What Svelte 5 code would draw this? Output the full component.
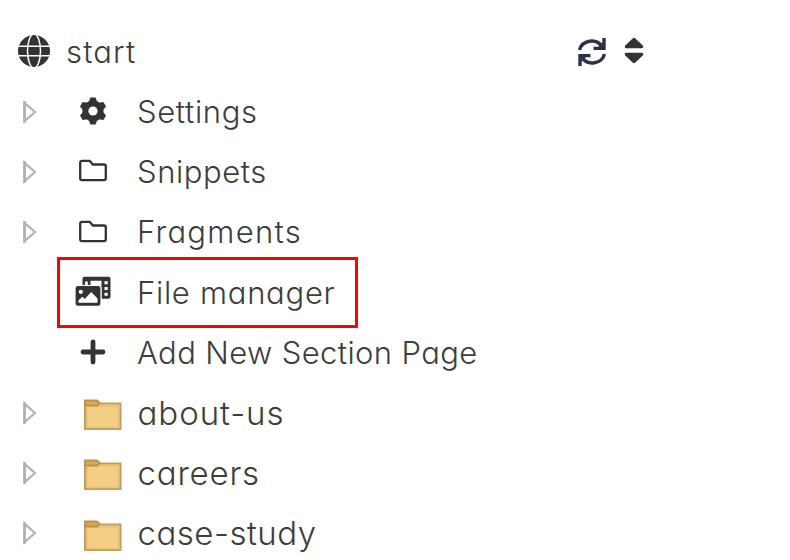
<script>
  const rows = [
    { label: 'Settings', icon: 'gear', open: true, ls: 0.65 },
    { label: 'Snippets', icon: 'folder', open: true, ls: 0.55 },
    { label: 'Fragments', icon: 'folder', open: true, ls: 1.3 },
    { label: 'File manager', icon: 'media', selected: true, ls: 0.72 },
    { label: 'Add New Section Page', icon: 'plus', ls: 0.38 },
    { label: 'about-us', icon: 'page', open: true, ls: 0.95 },
    { label: 'careers', icon: 'page', open: true, ls: 0.8 },
    { label: 'case-study', icon: 'page', open: true, ls: 0.5 }
  ];
</script>

<main>
  <header>
    <svg class="globe" width="34" height="34" viewBox="0 0 34 34">
      <circle cx="17" cy="17" r="16" fill="#333" />
      <g fill="none" stroke="#fff" stroke-width="1.5">
        <path d="M0 12.3H34M0 21.7H34" />
        <ellipse cx="17" cy="17" rx="6.5" ry="17" />
      </g>
    </svg>
    <span class="label title" style="letter-spacing: 1.15px">start</span>
    <svg class="refresh" width="30" height="30" viewBox="0 0 30 30" fill="none" stroke="#2b3149" stroke-width="3.4">
      <path d="M2.6 13A12.2 11.2 0 0 1 25 9.5M27.4 17A12.2 11.2 0 0 1 5 20.5" />
      <path d="M27 1V11.4H16.5M3 29V18.6H13.5" />
      <path d="M27 4V11.4H19.5ZM3 26V18.6H10.5Z" fill="#2b3149" stroke="none" />
    </svg>
    <svg class="sort" width="20" height="28" viewBox="0 0 20 28" fill="#333">
      <path d="M8.6 1.4Q10 0 11.4 1.4L19 8.8Q19.8 11.2 17.8 11.2H2.2Q.2 11.2 1 8.8ZM8.6 25.6Q10 27 11.4 25.6L19 18.2Q19.8 15.8 17.8 15.8H2.2Q.2 15.8 1 18.2Z" />
    </svg>
  </header>
  {#each rows as row}
    <div class="row" class:selected={row.selected}>
      <span class="arrow">
        {#if row.open}
          <svg width="16" height="26" viewBox="0 0 16 26" fill="#fff">
            <path d="M2.5 3.8L13 13L2.5 22.2Z" stroke="#b4b4b4" stroke-width="2.2" />
            <path d="M2.6 2V24" stroke="#b0b0b0" stroke-width="2.4" />
          </svg>
        {/if}
      </span>
      <span class="icon">
        {#if row.icon === 'gear'}
          <svg width="28" height="28" viewBox="0 0 28 28">
            <g fill="#333">
              <circle cx="14" cy="14" r="10.6" />
              {#each [0, 60, 120] as a}
                <path transform="rotate({a} 14 14)" d="M11.4.5H16.6L18.2 5V23L16.6 27.5H11.4L9.8 23V5Z" />
              {/each}
            </g>
            <circle cx="14" cy="14" r="4.6" fill="#fff" />
          </svg>
        {:else if row.icon === 'folder'}
          <svg width="28" height="24" viewBox="0 0 28 24" fill="none" stroke="#333" stroke-width="2.3" stroke-linejoin="round">
            <path d="M3 1.8H10.6L13.8 5.5H25Q26.8 5.5 26.8 7.3V19.3Q26.8 21.1 25 21.1H3Q1.2 21.1 1.2 19.3V3.6Q1.2 1.8 3 1.8Z" />
          </svg>
        {:else if row.icon === 'media'}
          <svg width="36" height="32" viewBox="0 0 36 32">
            <path fill="#333" d="M9.5 .8H33.5Q35.5 .8 35.5 2.8V20.8Q35.5 22.8 33.5 22.8H26.8V12.5Q26.8 9 23.3 9H7.5V2.8Q7.5 .8 9.5 .8Z" />
            <path fill="#fff" d="M10 5.5H12.8V9.1H10ZM15.5 4.8H26.5V10L23 9H15.5ZM29.5 5.2H32.7V8.2H29.5ZM29.5 11H32.7V14H29.5ZM29.5 16.7H32.7V19.7H29.5Z" />
            <rect x=".6" y="10.1" width="24.8" height="19.6" rx="2.5" fill="#333" />
            <circle cx="5.8" cy="15.8" r="2.1" fill="#fff" />
            <path fill="#fff" d="M3.5 26.8V24.3L7.5 20.8L9.8 23.1L16.2 16L22.5 22.5V26.8Z" />
          </svg>
        {:else if row.icon === 'plus'}
          <svg width="26" height="26" viewBox="0 0 26 26" stroke="#333" stroke-width="4.8" stroke-linecap="round">
            <path d="M13 3V23M3 13H23" />
          </svg>
        {:else}
          <svg class="yellow" width="40" height="32" viewBox="0 0 40 32">
            <path d="M2 30.5V5H37.5V30.5Z" fill="#f5ce85" stroke="#bf9f60" stroke-width="2" />
            <path d="M4 29V7.5H35.5V29Z" fill="none" stroke="#e8c27b" stroke-width="1.6" />
            <path d="M2 7V2H14L16.5 4.3L14.5 7Z" fill="#dda950" stroke="#b9934f" stroke-width="1.8" />
          </svg>
        {/if}
      </span>
      <span class="label" class:large={row.icon === 'page'} style="letter-spacing: {row.ls}px">{row.label}</span>
    </div>
  {/each}
</main>

<style>
  :global(body) { margin: 0; background: #fff; }
  main {
    width: 790px;
    height: 560px;
    box-sizing: border-box;
    padding-top: 21px;
    overflow: hidden;
    color: #3d3d3d;
    font: 300 31px/60px Inter, "Liberation Sans", sans-serif;
    font-feature-settings: "cv11", "ss03";
  }
  svg { display: block; flex: none; }
  header, .row { display: flex; align-items: center; height: 60.2px; }
  .label { white-space: pre; padding-top: 1.4px; }
  .large { font-size: 33px; margin-left: 0.5px; }
  .globe { margin-left: 17px; margin-top: -1px; }
  .title { width: 511px; margin-left: 15px; }
  .refresh { margin-top: 2.5px; }
  .sort { margin-left: 16.5px; margin-top: -1px; }
  .arrow { width: 36px; margin-left: 22px; padding-top: 1.5px; }
  .icon { display: flex; justify-content: center; width: 70px; margin-right: 9px; }
  .yellow { transform: translate(10px, 2.5px); }
  .selected {
    box-sizing: border-box;
    width: 301px;
    height: 71px;
    margin: -5.1px 0 -5.7px 57px;
    border: 3px solid #f00;
  }
  .selected .arrow { width: 0; margin-left: -2px; }
</style>
